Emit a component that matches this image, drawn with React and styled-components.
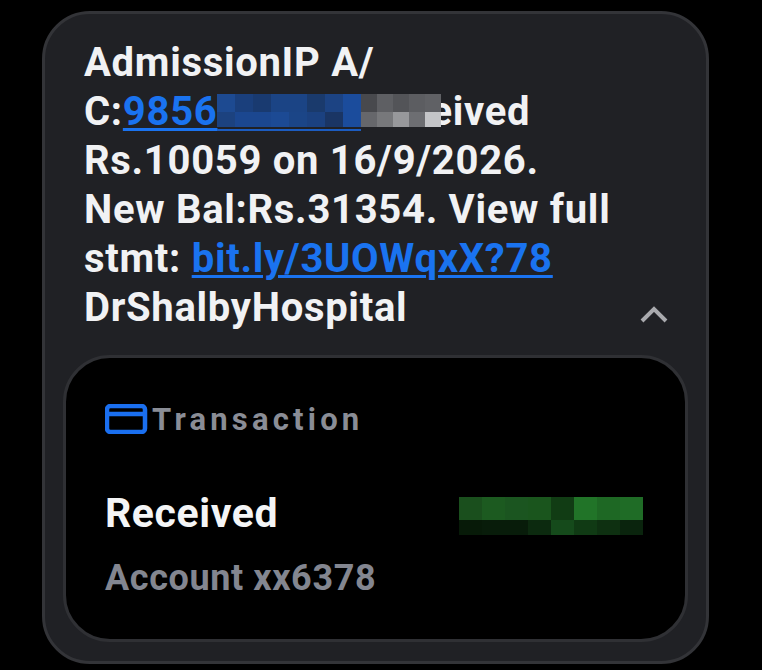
import React from 'react';
import styled, { createGlobalStyle } from 'styled-components';

const blueTop = ['#1d4a91', '#1a3f7c', '#193a70', '#1b4485', '#1b4485', '#1a3a6c', '#1c4383', '#1b4c9c'];
const blueBottom = ['#1c427f', '#1b4790', '#1b4790', '#1c4a94', '#1b4587', '#1b4180', '#1a3564', '#1b4c9c'];
const greyTop = ['#48494d', '#5e5f63', '#535458', '#5c5d61', '#606165'];
const greyBottom = ['#66676b', '#77787b', '#97989b', '#6d6e72', '#c4c5c8'];
const greenTop = ['#1a4f1d', '#1c5a20', '#1b5520', '#1a551d', '#113c14', '#217428', '#1e6824', '#1f6c26'];
const greenBottom = ['#071a08', '#081c0a', '#081c0a', '#0c2a0f', '#154a1b', '#103a14', '#0e3011', '#0a240d'];

export default function App() {
  return (
    <>
      <GlobalStyle />
      <Page>
        <Bubble>
          <Message>
            AdmissionIP A/
            <br />
            C:
            <MessageLink href="#">
              9856
              <Mosaic $cell={18} $underline>
                {blueTop.concat(blueBottom).map((color, i) => (
                  <Cell key={'blue_' + i} $color={color} />
                ))}
              </Mosaic>
            </MessageLink>
            <Mosaic $cell={16} $overlap={11}>
              {greyTop.concat(greyBottom).map((color, i) => (
                <Cell key={'grey_' + i} $color={color} />
              ))}
            </Mosaic>
            eived
            <br />
            Rs.10059 on 16/9/2026.
            <br />
            New Bal:Rs.31354. View full
            <br />
            stmt: <MessageLink href="#">bit.ly/3UOWqxX?78</MessageLink>
            <br />
            DrShalbyHospital
            <Chevron viewBox="0 0 28 18">
              <path d="M2 16 L14 4 L26 16" />
            </Chevron>
          </Message>

          <Card>
            <CardTitle>
              <CardIcon viewBox="0 0 44 30">
                <rect x="2" y="2" width="38" height="26" rx="3.5" />
                <line x1="2" y1="10" x2="40" y2="10" />
              </CardIcon>
              Transaction
            </CardTitle>
            <Row>
              <Received>Received</Received>
              <GreenMosaic>
                {greenTop.concat(greenBottom).map((color, i) => (
                  <Cell key={'green_' + i} $color={color} />
                ))}
              </GreenMosaic>
            </Row>
            <Account>Account xx6378</Account>
          </Card>
        </Bubble>
      </Page>
    </>
  );
}

const GlobalStyle = createGlobalStyle`
  html, body {
    margin: 0;
    background: #000;
  }
`;

const Page = styled.div`
  width: 762px;
  height: 670px;
  overflow: hidden;
  padding: 11px 0 0 42px;
  box-sizing: border-box;
  font-family: Roboto, "Liberation Sans", sans-serif;
`;

const Bubble = styled.section`
  width: 667px;
  height: 653px;
  box-sizing: border-box;
  background: #202125;
  border: 3px solid #333438;
  border-radius: 48px;
  padding: 24px 18px 0 18px;
`;

const Message = styled.p`
  position: relative;
  margin: 0;
  padding-left: 21px;
  height: 317px;
  font-size: 40px;
  line-height: 49px;
  font-weight: 700;
  letter-spacing: 0.7px;
  color: #f1f2f4;
`;

const MessageLink = styled.a`
  color: #1a73f0;
  text-decoration: underline;
  text-decoration-thickness: 3px;
  text-underline-offset: 3px;
`;

const Mosaic = styled.span`
  position: relative;
  display: inline-grid;
  grid-template-columns: repeat(${({ children }) => children.length / 2}, ${({ $cell }) => $cell}px);
  grid-template-rows: 18px 15px;
  vertical-align: top;
  margin-top: 7px;
  margin-right: ${({ $overlap }) => ($overlap ? -$overlap : 0)}px;
  ${({ $underline }) => $underline && 'padding-bottom: 2px; border-bottom: 2px solid #1c5cc0;'}
`;

const Cell = styled.span`
  background: ${({ $color }) => $color};
`;

const Chevron = styled.svg`
  position: absolute;
  right: 20px;
  bottom: 32px;
  width: 28px;
  height: 18px;
  fill: none;
  stroke: #a9aaae;
  stroke-width: 4px;
`;

const Card = styled.div`
  width: 625px;
  height: 287px;
  box-sizing: border-box;
  background: #000;
  border: 3px solid #2f3034;
  border-radius: 47px;
  padding: 45px 42px 0 39px;
`;

const CardTitle = styled.h3`
  display: flex;
  align-items: center;
  gap: 3px;
  margin: 0;
  height: 32px;
  font-size: 31px;
  font-weight: 700;
  letter-spacing: 4.2px;
  color: #8a8d96;
`;

const CardIcon = styled.svg`
  width: 44px;
  height: 30px;
  fill: none;
  stroke: #1a6ff0;
  stroke-width: 4.5px;
`;

const Row = styled.div`
  display: flex;
  justify-content: space-between;
  align-items: flex-start;
  margin-top: 53px;
`;

const Received = styled.span`
  font-size: 41px;
  line-height: 50px;
  font-weight: 700;
  letter-spacing: 0.6px;
  color: #f4f5f6;
`;

const GreenMosaic = styled.div`
  display: grid;
  grid-template-columns: repeat(8, 23px);
  grid-template-rows: 23px 15px;
  margin-top: 9px;
`;

const Account = styled.div`
  margin-top: 17px;
  font-size: 36px;
  line-height: 46px;
  font-weight: 700;
  letter-spacing: 0.6px;
  color: #838690;
`;
